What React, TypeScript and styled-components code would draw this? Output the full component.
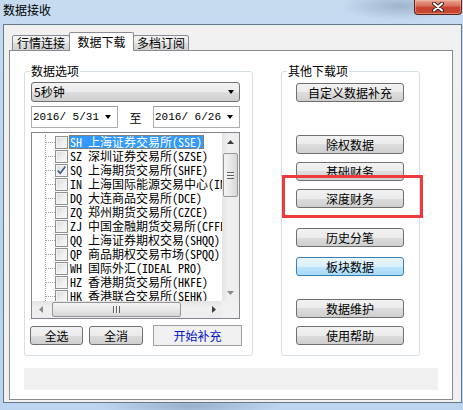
import styled, { createGlobalStyle } from "styled-components";

const GlobalStyle = createGlobalStyle`
  html, body { margin: 0; padding: 0; }
  body {
    font-family: "Noto Sans CJK SC", "Liberation Sans", sans-serif;
    font-size: 12px;
    color: #000;
  }
  * { box-sizing: border-box; }
`;

const exchanges = [
  { code: "SH", name: "上海证券交易所(SSE)", checked: false, selected: true },
  { code: "SZ", name: "深圳证券交易所(SZSE)", checked: false },
  { code: "SQ", name: "上海期货交易所(SHFE)", checked: true },
  { code: "IN", name: "上海国际能源交易中心(INE)", checked: false },
  { code: "DQ", name: "大连商品交易所(DCE)", checked: false },
  { code: "ZQ", name: "郑州期货交易所(CZCE)", checked: false },
  { code: "ZJ", name: "中国金融期货交易所(CFFEX)", checked: false },
  { code: "QQ", name: "上海证券期权交易(SHQQ)", checked: false },
  { code: "QP", name: "商品期权交易市场(SPQQ)", checked: false },
  { code: "WH", name: "国际外汇(IDEAL PRO)", checked: false },
  { code: "HZ", name: "香港期货交易所(HKFE)", checked: false },
  { code: "HK", name: "香港联合交易所(SEHK)", checked: false },
];

const otherItems = [
  { label: "自定义数据补充", gap: 4 },
  { label: "除权数据", gap: 33 },
  { label: "基础财务", gap: 8 },
  { label: "深度财务", gap: 8 },
  { label: "历史分笔", gap: 20 },
  { label: "板块数据", gap: 10, hot: true },
  { label: "数据维护", gap: 23 },
  { label: "使用帮助", gap: 8 },
];

export default function App() {
  return (
    <>
      <GlobalStyle />
      <Window>
        <TitleBar>
          <Caption>数据接收</Caption>
          <CloseButton>
            <svg width="12" height="10" viewBox="0 0 12 10">
              <path d="M2 1.5 L10 8.5 M10 1.5 L2 8.5" stroke="#3a2320" strokeWidth="4" strokeLinecap="round" />
              <path d="M2 1.5 L10 8.5 M10 1.5 L2 8.5" stroke="#fff" strokeWidth="2" strokeLinecap="round" />
            </svg>
          </CloseButton>
        </TitleBar>

        <Client>
          <TabStrip>
            <Tab $w={58} $first>行情连接</Tab>
            <Tab $w={65} $active>数据下载</Tab>
            <Tab $w={56}>多档订阅</Tab>
          </TabStrip>

          <Panel>
            <GroupRow>
              <Group $w={229}>
                <Legend>数据选项</Legend>
                <LeftStack>
                  <Combo>
                    <span>5秒钟</span>
                    <DownArrow />
                  </Combo>
                  <DateRow>
                    <DateBox>
                      <span>2016/ 5/31</span>
                      <DownArrow />
                    </DateBox>
                    <DateSep>至</DateSep>
                    <DateBox>
                      <span>2016/ 6/26</span>
                      <DownArrow />
                    </DateBox>
                  </DateRow>

                  <ListBox>
                    <Tree>
                      <TreeLines>
                        {exchanges.map((ex) => (
                          <TreeRow key={ex.code}>
                            <Connector />
                            <CheckBox>
                              {ex.checked && (
                                <svg width="11" height="11" viewBox="0 0 11 11">
                                  <path d="M1.8 5.6 L4.2 8.2 L9.4 1.6" fill="none" stroke="#3f5a92" strokeWidth="1.6" />
                                </svg>
                              )}
                            </CheckBox>
                            <ItemLabel $selected={ex.selected}>
                              {ex.code} {ex.name}
                            </ItemLabel>
                          </TreeRow>
                        ))}
                      </TreeLines>
                    </Tree>
                    <VScroll>
                      <ArrowCell>
                        <svg width="7" height="4" viewBox="0 0 7 4"><polygon points="0,4 7,4 3.5,0" fill="#3d3d3d" /></svg>
                      </ArrowCell>
                      <VThumb>
                        <VGrip />
                      </VThumb>
                      <Spacer />
                      <ArrowCell>
                        <svg width="7" height="4" viewBox="0 0 7 4"><polygon points="0,0 7,0 3.5,4" fill="#8a8a8a" /></svg>
                      </ArrowCell>
                    </VScroll>
                    <HScroll>
                      <ArrowCell>
                        <svg width="4" height="7" viewBox="0 0 4 7"><polygon points="4,0 4,7 0,3.5" fill="#8a8a8a" /></svg>
                      </ArrowCell>
                      <HThumb>
                        <HGrip />
                      </HThumb>
                      <Spacer />
                      <ArrowCell>
                        <svg width="4" height="7" viewBox="0 0 4 7"><polygon points="0,0 0,7 4,3.5" fill="#3d3d3d" /></svg>
                      </ArrowCell>
                    </HScroll>
                    <Corner />
                  </ListBox>

                  <ActionRow>
                    <Button $w={53}>全选</Button>
                    <Button $w={54} $gap={6}>全消</Button>
                    <FlatButton>开始补充</FlatButton>
                  </ActionRow>
                </LeftStack>
              </Group>

              <Group $w={139}>
                <Legend>其他下载项</Legend>
                <RightStack>
                  {otherItems.map((item) => (
                    <Button key={item.label} $w={108} $top={item.gap} $hot={item.hot}>
                      {item.label}
                    </Button>
                  ))}
                </RightStack>
              </Group>
            </GroupRow>
            <StatusBar />
          </Panel>
        </Client>

        <Highlight />
      </Window>
    </>
  );
}

const Window = styled.div`
  position: relative;
  display: flex;
  flex-direction: column;
  width: 463px;
  height: 410px;
  overflow: hidden;
  background:
    radial-gradient(ellipse 60px 14px at 400px 6px, rgba(90, 110, 140, 0.35), transparent),
    radial-gradient(ellipse 90px 10px at 190px 406px, rgba(70, 90, 120, 0.3), transparent),
    linear-gradient(180deg, #c6dbf0 0%, #b9d2ec 60%, #bcd4ed 100%);
`;

const TitleBar = styled.div`
  display: flex;
  justify-content: space-between;
  align-items: flex-start;
  height: 24px;
  padding-left: 3px;
`;

const Caption = styled.div`
  font-size: 12px;
  line-height: 20px;
  color: #000;
`;

const CloseButton = styled.div`
  display: flex;
  align-items: center;
  justify-content: center;
  width: 48px;
  height: 15px;
  margin-right: 1px;
  border: 1px solid #5e2219;
  border-top: none;
  border-radius: 0 0 4px 4px;
  background: linear-gradient(180deg, #e7a493 0%, #d9725d 40%, #c8432d 55%, #c44a30 100%);
  box-shadow: inset 0 0 0 1px rgba(255, 200, 180, 0.45);
`;

const Client = styled.div`
  display: flex;
  flex-direction: column;
  height: 379px;
  margin: 0 1px 0 3px;
  padding: 7px 8px 2px 5px;
  border: 1px solid #65778a;
  background: #f0f0f0;
`;

const TabStrip = styled.div`
  display: flex;
  align-items: flex-end;
  height: 19px;
`;

const Tab = styled.div<{ $w: number; $active?: boolean; $first?: boolean }>`
  position: relative;
  z-index: ${(p) => (p.$active ? 2 : 1)};
  width: ${(p) => p.$w}px;
  height: ${(p) => (p.$active ? 19 : 16)}px;
  margin-left: ${(p) => (p.$first ? 3 : -1)}px;
  border: 1px solid #898c95;
  border-bottom: ${(p) => (p.$active ? "none" : "1px solid #898c95")};
  border-radius: 2px 2px 0 0;
  background: ${(p) =>
    p.$active ? "#ffffff" : "linear-gradient(180deg, #f3f3f3 0%, #ebebeb 50%, #dedede 50%, #d2d2d2 100%)"};
  font-size: 12px;
  line-height: ${(p) => (p.$active ? 17 : 14)}px;
  text-align: center;
`;

const Panel = styled.div`
  position: relative;
  z-index: 0;
  display: flex;
  flex-direction: column;
  flex: 1;
  width: 444px;
  margin-top: -1px;
  padding: 12px 0 0 14px;
  border: 1px solid #898c95;
  background: #ffffff;
`;

const GroupRow = styled.div`
  display: flex;
  align-items: flex-start;
  gap: 28px;
`;

const Group = styled.fieldset<{ $w: number }>`
  width: ${(p) => p.$w}px;
  height: 293px;
  min-width: 0;
  margin: 0;
  padding: 0;
  border: 1px solid #d5dfe5;
  border-radius: 3px;
`;

const Legend = styled.legend`
  margin-left: 5px;
  padding: 0 1px;
  font-size: 12px;
  line-height: 16px;
`;

const LeftStack = styled.div`
  display: flex;
  flex-direction: column;
  align-items: flex-start;
  padding: 3px 0 0 6px;
`;

const RightStack = styled.div`
  display: flex;
  flex-direction: column;
  padding-left: 14px;
`;

const Combo = styled.div`
  display: flex;
  align-items: center;
  justify-content: space-between;
  width: 209px;
  height: 20px;
  padding: 0 5px 0 2px;
  border: 1px solid #707070;
  border-radius: 3px;
  background: linear-gradient(180deg, #f2f2f2 0%, #ebebeb 50%, #dddddd 50%, #cfcfcf 100%);
  font-size: 12px;
  line-height: 18px;
`;

const DownArrow = styled.span`
  width: 0;
  height: 0;
  border-left: 3.5px solid transparent;
  border-right: 3.5px solid transparent;
  border-top: 4px solid #000;
`;

const DateRow = styled.div`
  display: flex;
  align-items: center;
  width: 209px;
  height: 22px;
  margin-top: 4px;
`;

const DateBox = styled.div`
  display: flex;
  flex: none;
  align-items: center;
  justify-content: space-between;
  width: 87px;
  height: 22px;
  padding: 0 6px 0 1px;
  border: 1px solid #abadb3;
  border-top-color: #9a9ca3;
  background: #ffffff;
  font-family: "Liberation Mono", monospace;
  font-size: 11px;
`;

const DateSep = styled.div`
  flex: 1;
  text-align: center;
  font-size: 12px;
`;

const ListBox = styled.div`
  display: grid;
  grid-template-columns: 1fr 17px;
  grid-template-rows: 1fr 17px;
  width: 209px;
  height: 187px;
  margin-top: 4px;
  border: 1px solid #828790;
  background: #ffffff;
  overflow: hidden;
`;

const Tree = styled.div`
  overflow: hidden;
  padding-top: 2px;
`;

const TreeLines = styled.div`
  margin-left: 13px;
  min-height: 100%;
  border-left: 1px dotted #a0a0a0;
`;

const TreeRow = styled.div`
  display: flex;
  align-items: center;
  height: 14px;
  white-space: nowrap;
`;

const Connector = styled.span`
  flex: none;
  width: 9px;
  border-top: 1px dotted #a0a0a0;
`;

const CheckBox = styled.span`
  flex: none;
  display: flex;
  align-items: center;
  justify-content: center;
  width: 13px;
  height: 13px;
  border: 1px solid #8e8f8f;
  background: linear-gradient(135deg, #d6d8db 0%, #eef0f2 60%, #fbfbfb 100%);
  box-shadow: inset 0 0 0 1px #f4f4f4;
`;

const ItemLabel = styled.span<{ $selected?: boolean }>`
  flex: none;
  margin-left: 1px;
  padding-right: 1px;
  border: 1px dotted ${(p) => (p.$selected ? "#c86a10" : "transparent")};
  background: ${(p) => (p.$selected ? "#3399ff" : "transparent")};
  color: ${(p) => (p.$selected ? "#ffffff" : "#000000")};
  font-family: "Noto Sans Mono CJK SC", "Liberation Mono", "Noto Sans CJK SC", monospace;
  font-size: 12px;
  line-height: 12px;
`;

const VScroll = styled.div`
  display: flex;
  flex-direction: column;
  align-items: stretch;
  background: linear-gradient(90deg, #e3e3e3 0%, #f0f0f0 40%, #ececec 100%);
`;

const HScroll = styled.div`
  display: flex;
  align-items: stretch;
  background: linear-gradient(180deg, #e3e3e3 0%, #f0f0f0 40%, #ececec 100%);
`;

const ArrowCell = styled.div`
  display: flex;
  align-items: center;
  justify-content: center;
  flex: none;
  width: 17px;
  height: 17px;
`;

const Spacer = styled.div`
  flex: 1;
`;

const VThumb = styled.div`
  display: flex;
  align-items: center;
  justify-content: center;
  height: 44px;
  margin: 3px 1px 0 1px;
  border: 1px solid #979797;
  border-radius: 2px;
  background: linear-gradient(90deg, #f4f4f4 0%, #e8e8e8 50%, #d7d7d7 100%);
`;

const VGrip = styled.span`
  width: 7px;
  height: 7px;
  background: repeating-linear-gradient(180deg, #5f5f5f 0 1px, #f6f6f6 1px 2px, transparent 2px 3px);
`;

const HThumb = styled.div`
  display: flex;
  align-items: center;
  justify-content: center;
  width: 129px;
  margin: 1px 0 1px 3px;
  border: 1px solid #979797;
  border-radius: 2px;
  background: linear-gradient(180deg, #f4f4f4 0%, #e8e8e8 50%, #d7d7d7 100%);
`;

const HGrip = styled.span`
  width: 7px;
  height: 7px;
  background: repeating-linear-gradient(90deg, #5f5f5f 0 1px, #f6f6f6 1px 2px, transparent 2px 3px);
`;

const Corner = styled.div`
  background: #f0f0f0;
`;

const ActionRow = styled.div`
  display: flex;
  align-items: center;
  height: 21px;
  margin-top: 6px;
  margin-left: -1px;
`;

const Button = styled.button<{ $w: number; $gap?: number; $top?: number; $hot?: boolean }>`
  width: ${(p) => p.$w}px;
  height: 19px;
  margin: ${(p) => p.$top ?? 0}px 0 0 ${(p) => p.$gap ?? 0}px;
  padding: 0;
  border: 1px solid ${(p) => (p.$hot ? "#3c7fb1" : "#707070")};
  border-radius: 3px;
  background: ${(p) =>
    p.$hot
      ? "linear-gradient(180deg, #eaf6fd 0%, #d9f0fc 50%, #bee6fd 50%, #a7d9f5 100%)"
      : "linear-gradient(180deg, #f2f2f2 0%, #ebebeb 50%, #dddddd 50%, #cfcfcf 100%)"};
  font-family: inherit;
  font-size: 12px;
  line-height: 17px;
  color: #000;
  text-align: center;
`;

const FlatButton = styled.div`
  width: 89px;
  height: 21px;
  margin-left: 10px;
  border: 1px solid #a0a0a0;
  background: #f0f0f0;
  color: #0010c8;
  font-size: 12px;
  line-height: 19px;
  text-align: center;
`;

const StatusBar = styled.div`
  width: 414px;
  height: 22px;
  margin-top: 12px;
  background: #f0f0f0;
`;

const Highlight = styled.div`
  position: absolute;
  left: 282px;
  top: 175px;
  width: 141px;
  height: 43px;
  border: 3px solid #ef3b3b;
  pointer-events: none;
`;
